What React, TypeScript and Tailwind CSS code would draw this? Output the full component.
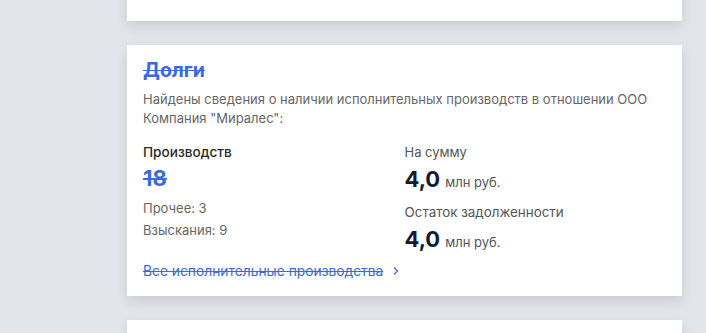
import React from 'react';

const font = { fontFamily: 'Inter, "Noto Sans", sans-serif' };

const Chevron = () => (
  <svg width="8" height="10" viewBox="0 0 8 10" fill="none" className="ml-[9px]">
    <path d="M2 1.5L5.5 5L2 8.5" stroke="#3a6bd6" strokeWidth="1.2" />
  </svg>
);

const App: React.FC = () => {
  return (
    <div className="bg-[#e2e5e9] min-h-screen w-full h-[333px] overflow-hidden" style={font}>
      <div className="w-[555px] ml-[127px] -mt-[40px] flex flex-col gap-[24px]">
        {/* previous card, mostly scrolled off */}
        <div className="bg-white h-[61px] shadow-[0_5px_12px_rgba(0,0,0,0.11)] px-4 flex items-end pb-[19px]">
          <span className="text-[13.8px] leading-[20px] text-[#3a6bd6] line-through">Все арбитражные дела</span>
        </div>

        {/* Debts card */}
        <div className="bg-white shadow-[0_5px_12px_rgba(0,0,0,0.11)] px-4 pt-[13px] pb-[15px]">
          <h2 className="text-[19.5px] leading-[24px] font-bold text-[#3a6bd6] line-through">Долги</h2>
          <p className="mt-[8px] text-[13px] leading-[19px] text-[#666]">
            Найдены сведения о наличии исполнительных производств в отношении ООО Компания "Миралес":
          </p>
          <div className="grid grid-cols-2 mt-[15px]">
            <div className="flex flex-col">
              <div className="text-[13.6px] leading-[18px] font-medium text-[#2a2a2a]">Производств</div>
              <div className="mt-[3px] text-[22px] leading-[28px] font-bold text-[#3a6bd6] line-through">18</div>
              <div className="mt-[5px] text-[13px] leading-[22px] text-[#666]">Прочее: 3</div>
              <div className="text-[13px] leading-[22px] text-[#666]">Взыскания: 9</div>
            </div>
            <div className="flex flex-col">
              <div className="text-[13px] leading-[18px] text-[#555]">На сумму</div>
              <div className="flex items-baseline gap-[5px] mt-[4px]">
                <span className="text-[22px] leading-[28px] font-bold text-[#141a33]">4,0</span>
                <span className="text-[13px] text-[#555]">млн руб.</span>
              </div>
              <div className="mt-[10px] text-[13.4px] leading-[18px] text-[#555]">Остаток задолженности</div>
              <div className="flex items-baseline gap-[5px] mt-[4px]">
                <span className="text-[22px] leading-[28px] font-bold text-[#141a33]">4,0</span>
                <span className="text-[13px] text-[#555]">млн руб.</span>
              </div>
            </div>
          </div>
          <div className="mt-[8px] flex items-center">
            <span className="text-[13.8px] leading-[20px] text-[#3a6bd6] line-through">Все исполнительные производства</span>
            <Chevron />
          </div>
        </div>

        {/* next card */}
        <div className="bg-white h-[60px] shadow-[0_5px_12px_rgba(0,0,0,0.11)]"></div>
      </div>
    </div>
  );
};

export default App;
